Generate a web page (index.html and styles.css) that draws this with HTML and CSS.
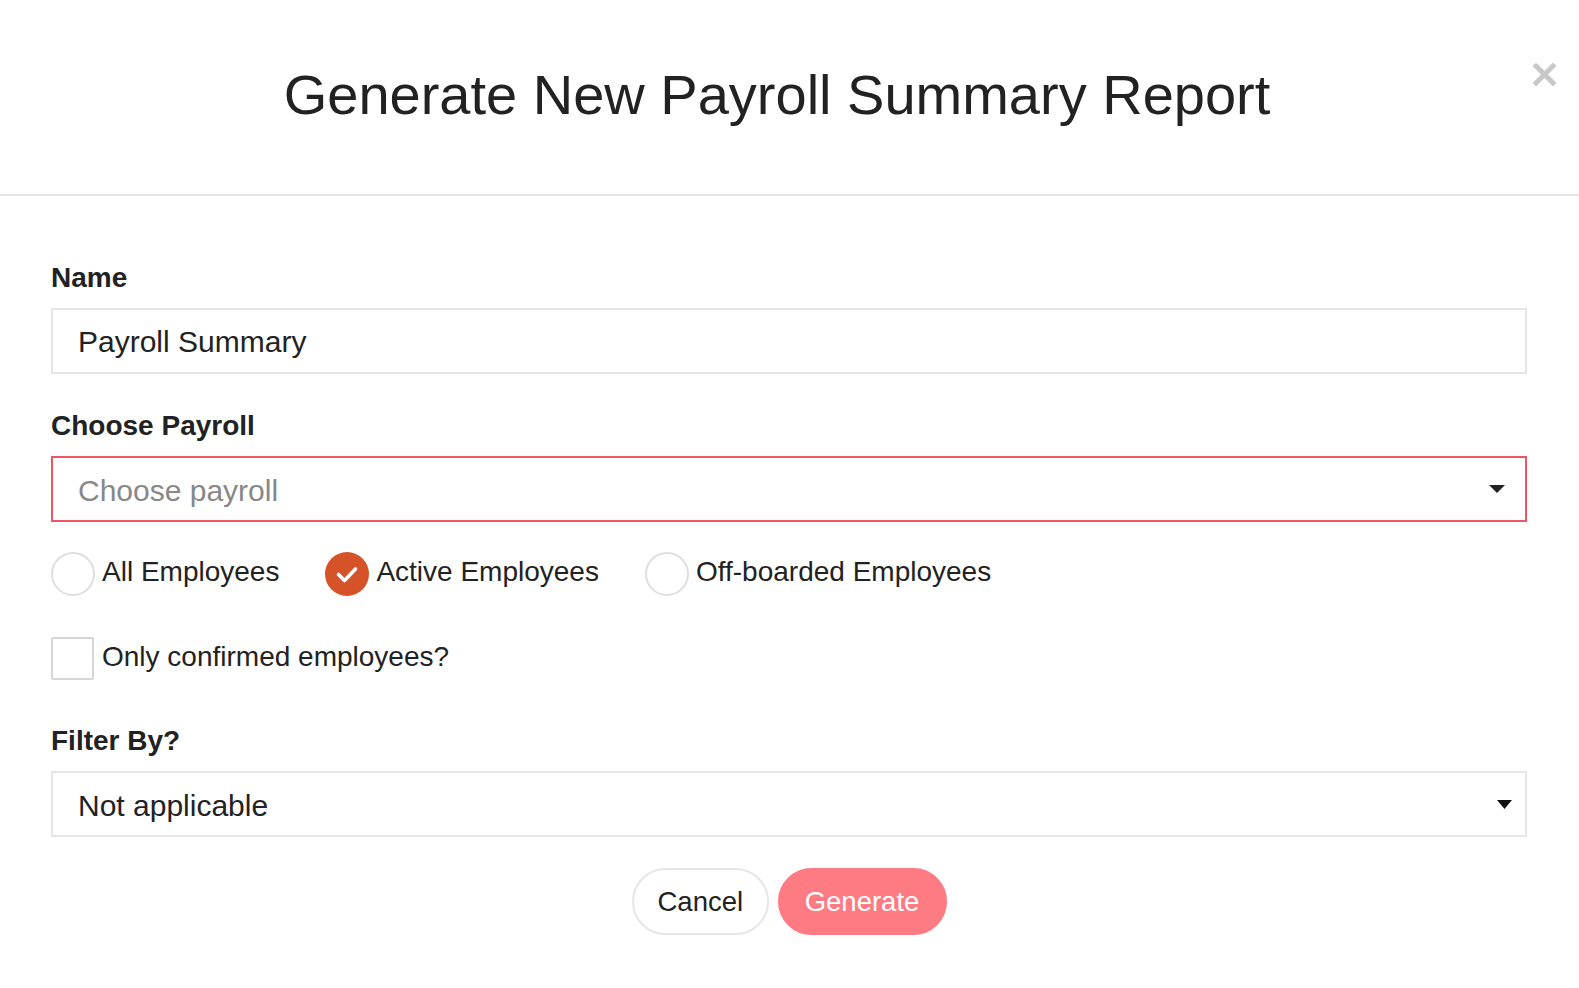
FILE: index.html
```html
<!DOCTYPE html>
<html lang="en">
<head>
<meta charset="utf-8">
<title>Generate New Payroll Summary Report</title>
<link rel="stylesheet" href="styles.css">
</head>
<body>
<div class="modal">
  <div class="modal-header">
    <h1 class="modal-title">Generate New Payroll Summary Report</h1>
    <button class="close" type="button" aria-label="Close">
      <svg width="23" height="23" viewBox="0 0 23 23"><path d="M3 3 L20 20 M20 3 L3 20" stroke="#c8c8c8" stroke-width="5" stroke-linecap="square"/></svg>
    </button>
  </div>
  <div class="modal-body">
    <label class="label">Name</label>
    <div class="field">Payroll Summary</div>

    <label class="label label-gap">Choose Payroll</label>
    <div class="field field-select field-error">
      <span class="placeholder">Choose payroll</span>
      <svg class="caret" width="16" height="8" viewBox="0 0 16 8"><path d="M0 0 H16 L8 8 Z" fill="#222"/></svg>
    </div>

    <div class="radios">
      <div class="radio"><span class="circle"></span><span class="opt-text">All Employees</span></div>
      <div class="radio"><span class="circle checked"><svg width="44" height="44" viewBox="0 0 44 44"><polyline points="13.5,22.5 19.5,28.5 30.5,17" fill="none" stroke="#fff" stroke-width="3.6" stroke-linecap="round" stroke-linejoin="round"/></svg></span><span class="opt-text">Active Employees</span></div>
      <div class="radio"><span class="circle"></span><span class="opt-text">Off-boarded Employees</span></div>
    </div>

    <div class="checkbox"><span class="box"></span><span class="opt-text">Only confirmed employees?</span></div>

    <label class="label label-gap-lg">Filter By?</label>
    <div class="field field-select field-select-plain">
      <span>Not applicable</span>
      <svg class="caret" width="15" height="9" viewBox="0 0 15 9"><path d="M0 0 H15 L7.5 9 Z" fill="#111"/></svg>
    </div>

    <div class="actions">
      <button class="btn btn-cancel" type="button">Cancel</button>
      <button class="btn btn-generate" type="button">Generate</button>
    </div>
  </div>
</div>
</body>
</html>
```
FILE: styles.css
```css
html, body {
  margin: 0;
  padding: 0;
  background: #fff;
}

body {
  font-family: "Liberation Sans", Arial, Helvetica, sans-serif;
  color: #222;
}

.modal {
  width: 100%;
}

.modal-header {
  position: relative;
  padding: 61px 25px 66px 0;
  border-bottom: 2px solid #e6e6e6;
}

.modal-title {
  margin: 0;
  font-size: 56px;
  font-weight: normal;
  line-height: 67px;
  text-align: center;
  color: #222;
}

.close {
  position: absolute;
  top: 63px;
  right: 23px;
  width: 23px;
  height: 23px;
  padding: 0;
  border: 0;
  background: transparent;
  display: block;
}

.close svg {
  display: block;
}

.modal-body {
  padding: 65px 52px 0 51px;
}

.label {
  display: block;
  font-size: 28px;
  font-weight: bold;
  line-height: 33px;
  margin-bottom: 14px;
  color: #222;
}

.label-gap {
  margin-top: 35px;
}

.label-gap-lg {
  margin-top: 44px;
}

.field {
  box-sizing: border-box;
  height: 66px;
  border: 2px solid #e6e6e6;
  padding: 2px 20px 0 25px;
  display: flex;
  align-items: center;
  font-size: 30px;
  color: #222;
}

.field-select {
  justify-content: space-between;
  padding-top: 4px;
}

.field-select .caret {
  margin-top: -4px;
}

.field-error {
  border-color: #ee5565;
}

.field-select-plain {
  padding-right: 13px;
}

.placeholder {
  color: #888;
}

.caret {
  display: block;
  flex: none;
}

.radios {
  margin-top: 30px;
  display: flex;
  align-items: center;
  gap: 46px;
  font-size: 28px;
}

.radio {
  display: flex;
  align-items: center;
  gap: 7px;
}

.opt-text {
  padding-bottom: 4px;
}

.circle {
  box-sizing: border-box;
  width: 44px;
  height: 44px;
  border-radius: 50%;
  border: 2px solid #dedede;
  display: block;
  flex: none;
}

.circle.checked {
  border: 0;
  background: #d65228;
}

.circle svg {
  display: block;
}

.checkbox {
  margin-top: 41px;
  display: flex;
  align-items: center;
  gap: 8px;
  font-size: 28px;
}

.box {
  box-sizing: border-box;
  width: 43px;
  height: 43px;
  border: 2px solid #d6d6d6;
  border-radius: 2px;
  display: block;
  flex: none;
}

.actions {
  margin-top: 31px;
  display: flex;
  justify-content: center;
  gap: 9px;
}

.btn {
  box-sizing: border-box;
  height: 67px;
  padding: 0 24px;
  border-radius: 34px;
  font-family: "Liberation Sans", Arial, Helvetica, sans-serif;
  font-size: 27.5px;
  line-height: 1;
  cursor: pointer;
}

.btn-cancel {
  width: 137px;
  background: #fff;
  border: 2px solid #e6e6e6;
  color: #222;
}

.btn-generate {
  width: 169px;
  background: #ff7b83;
  border: 2px solid #ff7b83;
  color: #fff;
}
```
